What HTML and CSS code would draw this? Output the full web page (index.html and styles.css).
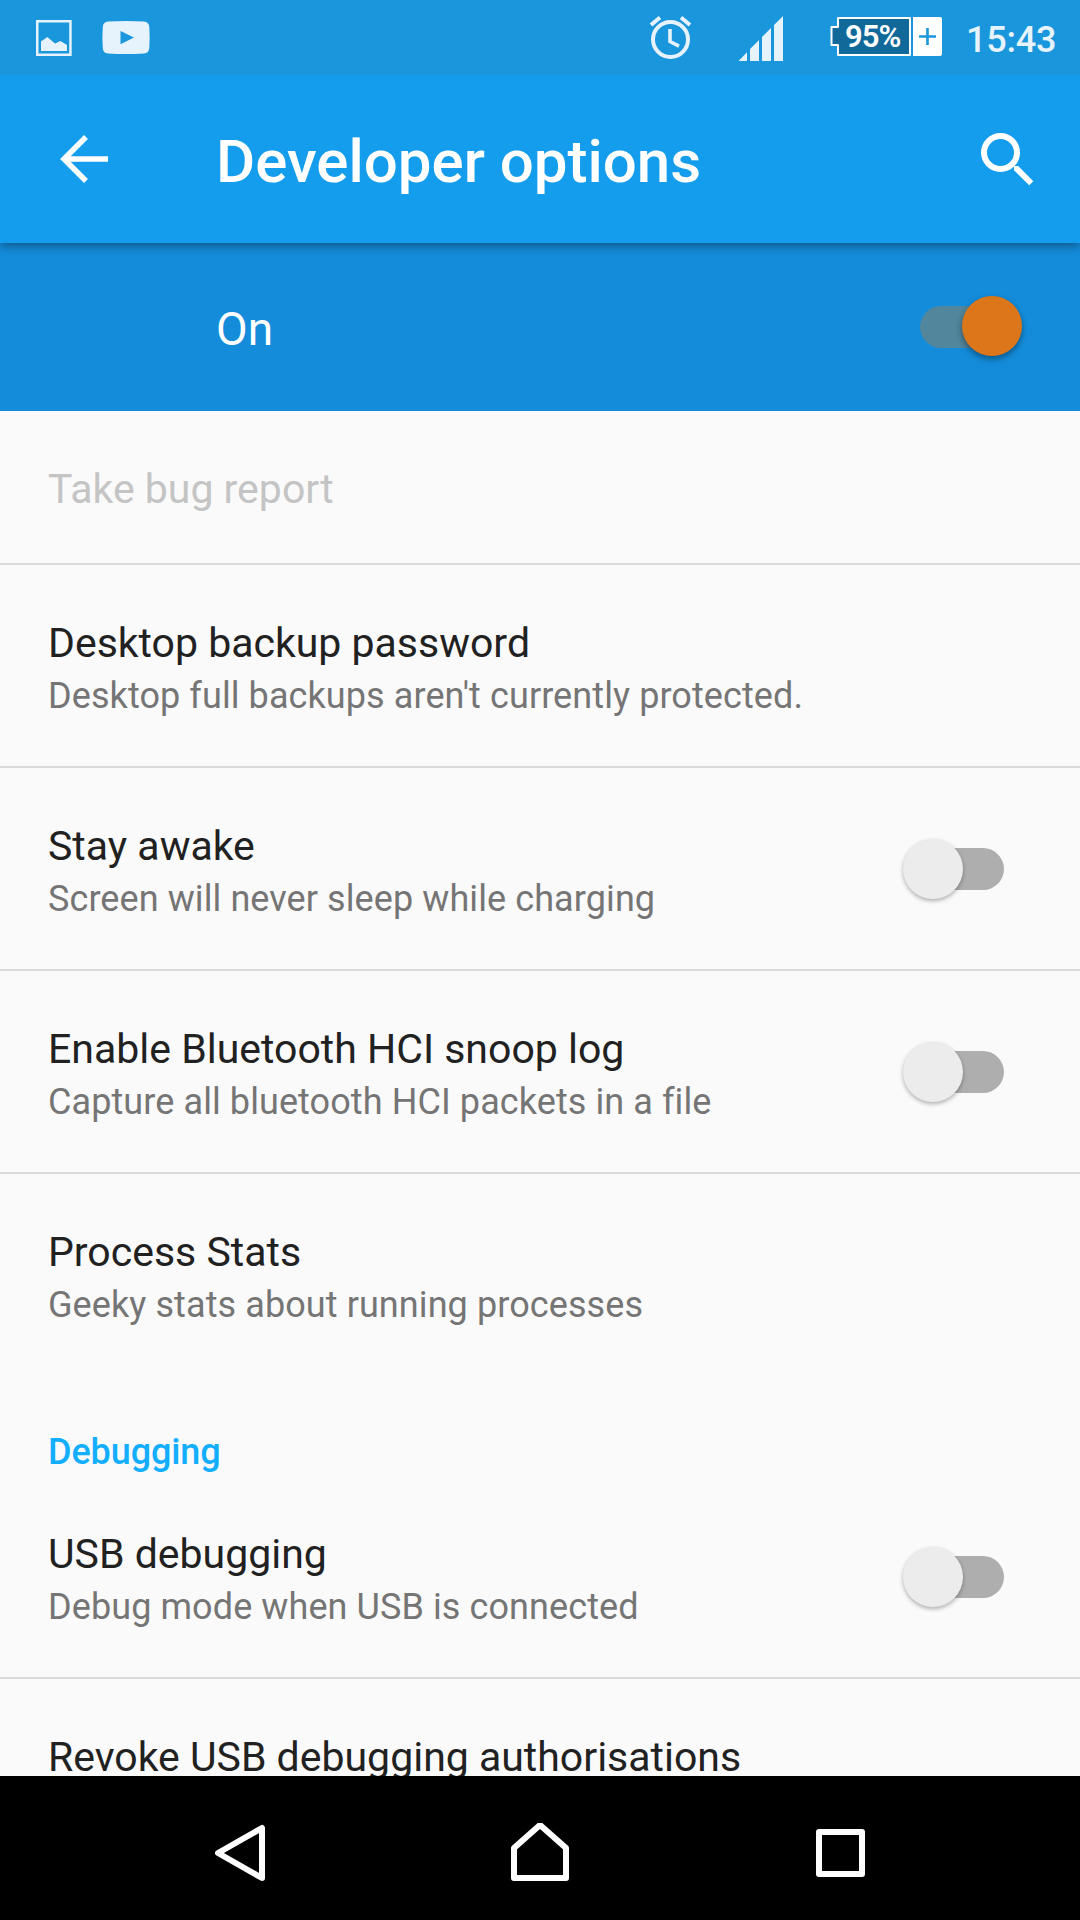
FILE: index.html
```html
<!DOCTYPE html>
<html lang="en">
<head>
<meta charset="utf-8">
<title>Developer options</title>
<link rel="stylesheet" href="styles.css">
</head>
<body>
<div class="screen">
  <div class="status-bar">
    <svg class="status-left" width="160" height="75" viewBox="0 0 160 75">
      <g fill="#e6f3fc">
        <path fill-rule="evenodd" d="M36 20h35.700v36H36zM38.500 22.500v31h30.700v-31z"/>
        <path d="M41 41.500l6.300-4.500 7.700 6.500 5.500-2.500 6.500 4v6H41z"/>
        <path fill-rule="evenodd" d="M108 21.500q18-1 36 0 5 .5 5.300 5.500.7 10.500 0 21-.3 5-5.300 5.500-18 1-36 0-5-.5-5.200-5.500-.8-10.500 0-21 .2-5 5.200-5.500zM120.500 31v13.200l13.500-6.600z"/>
      </g>
    </svg>
    <svg class="alarm" width="44" height="75" viewBox="0 0 44 75">
      <g fill="none" stroke="#e6f3fc" stroke-width="4">
        <circle cx="22.500" cy="39.500" r="17.500"/>
        <path stroke-width="3.600" d="M22 29v12.500l9 4.700"/>
        <path d="M3 25l9-7.500M42 25l-9-7.500"/>
      </g>
    </svg>
    <svg class="signal" width="46" height="75" viewBox="0 0 46 75">
      <path fill="#e6f3fc" d="M.5 61L9 52.300V61zM12 61V49l9-9v21zM24 61V37l9-9v33zM36 61V25l9-9v45z"/>
    </svg>
    <div class="battery">
      <svg class="battery-shape" width="113" height="42" viewBox="0 0 113 42">
        <path fill="#11699a" stroke="#fff" stroke-width="2" stroke-linejoin="round" d="M8 2h72v37H8V29H1.500V11H8z"/>
        <path fill="#fff" d="M83 1h27q2 0 2 2v35q0 2-2 2H83z"/>
        <path fill="none" stroke="#1a96dc" stroke-width="2.600" d="M89 20.500h17M97.500 12v17"/>
      </svg>
      <span class="battery-level">95%</span>
    </div>
    <span class="clock">15:43</span>
  </div>

  <header class="app-bar">
    <svg class="back" width="48" height="48" viewBox="0 0 48 48">
      <path fill="none" stroke="#fff" stroke-width="5.500" d="M48 24H4M26 2L4 24l22 22"/>
    </svg>
    <h1 class="app-title">Developer options</h1>
    <svg class="search" width="54" height="54" viewBox="0 0 54 54">
      <circle cx="20.500" cy="20.500" r="16.500" fill="none" stroke="#fff" stroke-width="6"/>
      <path fill="#fff" d="M34 34h4.200L53.300 49.200l-4.100 4.100L34 38.200z"/>
    </svg>
  </header>

  <div class="master">
    <span class="master-label">On</span>
    <div class="switch on"><div class="thumb"></div></div>
  </div>

  <main class="list">
    <div class="row single"><div class="text"><div class="title disabled">Take bug report</div></div></div>
    <div class="row"><div class="text"><div class="title">Desktop backup password</div><div class="summary">Desktop full backups aren't currently protected.</div></div></div>
    <div class="row"><div class="text"><div class="title">Stay awake</div><div class="summary">Screen will never sleep while charging</div></div><div class="switch"><div class="thumb"></div></div></div>
    <div class="row"><div class="text"><div class="title">Enable Bluetooth HCI snoop log</div><div class="summary">Capture all bluetooth HCI packets in a file</div></div><div class="switch"><div class="thumb"></div></div></div>
    <div class="row last"><div class="text"><div class="title">Process Stats</div><div class="summary">Geeky stats about running processes</div></div></div>
    <h2 class="category">Debugging</h2>
    <div class="row"><div class="text"><div class="title">USB debugging</div><div class="summary">Debug mode when USB is connected</div></div><div class="switch"><div class="thumb"></div></div></div>
    <div class="row"><div class="text"><div class="title">Revoke USB debugging authorisations</div></div></div>
  </main>

  <nav class="nav-bar">
    <svg width="60" height="60" viewBox="0 0 60 60"><path d="M52 5v50L8 30z"/></svg>
    <svg width="60" height="60" viewBox="0 0 60 60"><path d="M4 25L30 2l26 23v30H4z"/></svg>
    <svg width="60" height="60" viewBox="0 0 60 60"><path d="M9 9h43v42H9z"/></svg>
  </nav>
</div>
</body>
</html>
```
FILE: styles.css
```css
* { box-sizing: border-box; }
body { margin: 0; font-family: Roboto, sans-serif; background: #000; }
svg { display: block; flex: none; }
h1, h2 { margin: 0; }

.screen {
  display: flex;
  flex-direction: column;
  width: 1080px;
  height: 1920px;
  overflow: hidden;
  background: #fafafa;
}

.status-bar {
  display: flex;
  flex: none;
  position: relative;
  z-index: 2;
  height: 75px;
  background: #1a96dc;
}
.status-left { margin-right: auto; }
.alarm { margin-right: 46px; }
.signal { margin-right: 46px; }
.battery { position: relative; width: 113px; padding-top: 16px; margin-right: 23px; }
.battery-level {
  position: absolute;
  left: 15px;
  top: 16px;
  font-size: 31px;
  font-weight: 600;
  line-height: 42px;
  letter-spacing: -1px;
  color: #fff;
}
.clock {
  width: 114px;
  font-size: 36px;
  font-weight: 500;
  line-height: 80px;
  letter-spacing: -.25px;
  color: #e6f3fc;
}

.app-bar {
  display: flex;
  align-items: center;
  flex: none;
  position: relative;
  z-index: 1;
  height: 168px;
  padding: 0 46px 0 60px;
  background: #159ded;
  box-shadow: 0 3px 9px rgba(0, 0, 0, .38);
}
.app-title {
  flex: 1;
  margin-left: 108px;
  font-size: 60px;
  font-weight: 500;
  line-height: 72px;
  padding-top: 6px;
  color: #fff;
}

.master {
  display: flex;
  align-items: center;
  flex: none;
  height: 168px;
  padding: 0 58px 0 216px;
  background: #148cda;
}
.master-label { flex: 1; font-size: 46px; line-height: 56px; padding-top: 3px; color: #fff; }

.switch {
  position: relative;
  flex: none;
  width: 84px;
  height: 42px;
  border-radius: 21px;
  background: #aeaeae;
}
.thumb {
  position: absolute;
  left: -17.500px;
  top: -9.500px;
  width: 60px;
  height: 60px;
  border-radius: 50%;
  background: #ececec;
  box-shadow: 0 2px 4px rgba(0, 0, 0, .3);
}
.switch.on { width: 102px; background: linear-gradient(90deg, #51869c 84px, transparent 84px); }
.switch.on .thumb { left: 41.700px; top: -9.700px; background: #dc761b; box-shadow: 0 3px 6px rgba(0, 0, 0, .4); }

.list { flex: 1; min-height: 0; overflow: hidden; }
.row {
  display: flex;
  justify-content: space-between;
  align-items: center;
  height: 203px;
  padding: 1px 76px 0 48px;
  border-bottom: 2px solid #dadada;
}
.text { align-self: flex-start; padding-top: 49px; }
.single { height: 154px; }
.last { height: 201px; border-bottom: 0; }
.title { font-size: 41px; line-height: 56px; color: #212121; white-space: nowrap; }
.title.disabled { color: #c4c4c4; }
.summary { font-size: 36px; line-height: 50px; letter-spacing: .09px; color: #757575; white-space: nowrap; }
.category {
  height: 101px;
  padding: 52px 0 0 48px;
  font-size: 36px;
  font-weight: 500;
  line-height: 50px;
  letter-spacing: -.1px;
  color: #14aeff;
}

.nav-bar {
  display: flex;
  align-items: center;
  justify-content: center;
  gap: 240px;
  flex: none;
  height: 144px;
  padding-top: 10px;
  background: #000;
}
.nav-bar path { fill: none; stroke: #fff; stroke-width: 6; stroke-linejoin: round; }
```
